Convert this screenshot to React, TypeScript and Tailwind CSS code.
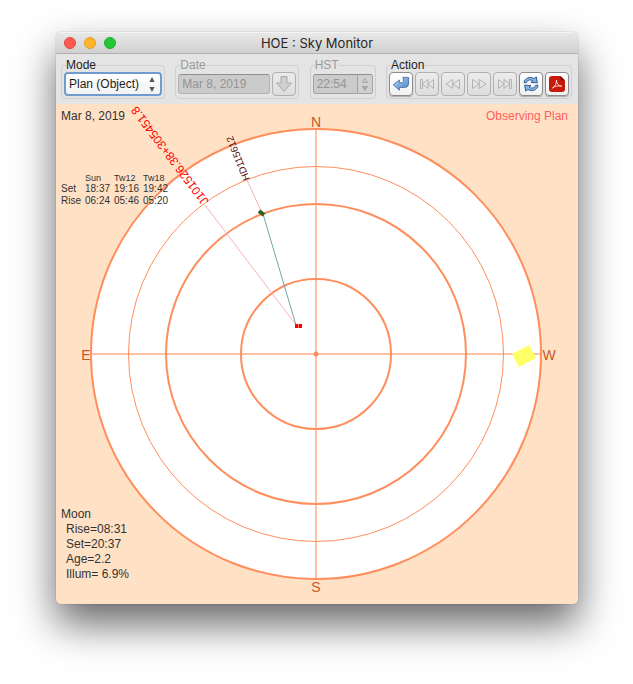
import { useState, type ReactNode } from "react";

const RING = "#ff8e5c";

const rings = [
  { r: 225, width: 2 },
  { r: 187.5, width: 1 },
  { r: 150, width: 2 },
  { r: 75, width: 2 },
];

const modes = ["Plan (Object)", "Plan (Time)", "Monitor"];

const twilight = [
  { label: "Set", times: ["18:37", "19:16", "19:42"] },
  { label: "Rise", times: ["06:24", "05:46", "05:20"] },
];

const moon = ["Rise=08:31", "Set=20:37", "Age=2.2", "Illum= 6.9%"];

function Group({
  title,
  disabled,
  htmlFor,
  children,
}: {
  title: string;
  disabled?: boolean;
  htmlFor?: string;
  children: ReactNode;
}) {
  return (
    <fieldset
      disabled={disabled}
      className="min-w-0 rounded border border-[#cfcfcf] px-[2px] pb-[2px]"
    >
      <legend
        className={`ml-[2px] h-[14px] text-xs leading-[14px] ${disabled ? "text-[#999999]" : "text-[#1c1c1c]"}`}
      >
        {htmlFor ? <label htmlFor={htmlFor}>{title}</label> : title}
      </legend>
      <div className="flex h-6 items-center gap-[2px]">{children}</div>
    </fieldset>
  );
}

function ToolButton({
  label,
  disabled,
  children,
}: {
  label: string;
  disabled?: boolean;
  children: ReactNode;
}) {
  return (
    <button
      type="button"
      aria-label={label}
      disabled={disabled}
      className={`flex size-6 shrink-0 items-center justify-center rounded border ${
        disabled
          ? "border-[#b0b0b0] bg-linear-to-b from-[#ececec] to-[#dddddd]"
          : "border-[#8c8c8c] bg-linear-to-b from-white to-[#f1f1f1] shadow-[0_1px_1px_rgba(0,0,0,0.25)]"
      }`}
    >
      {children}
    </button>
  );
}

function ReturnIcon() {
  return (
    <svg viewBox="0 0 18 18" className="size-[18px]">
      <defs>
        <linearGradient id="returnFill" x1="0" y1="0" x2="1" y2="1">
          <stop offset="0" stopColor="#c3dbf1" />
          <stop offset="0.5" stopColor="#7fabdb" />
          <stop offset="1" stopColor="#4d82c0" />
        </linearGradient>
      </defs>
      <path
        d="M1.2 9.800 L7.4 5 V7.700 H10.2 Q11.4 7.600 11.4 6.400 V3.200 L10.6 2.400 H16.6 V8.200 Q16.6 12.400 12.400 12.400 H7.400 V15.200 Z"
        fill="url(#returnFill)"
        stroke="#3a679f"
        strokeWidth="0.8"
        strokeLinejoin="round"
      />
    </svg>
  );
}

function TransportIcon({ d }: { d: string }) {
  return (
    <svg viewBox="0 0 18 18" className="size-[18px]">
      <path d={d} fill="#e6e6e6" stroke="#b2b2b2" strokeWidth="1" strokeLinejoin="round" />
    </svg>
  );
}

function RefreshIcon() {
  return (
    <svg viewBox="0 0 18 18" className="size-[18px]" strokeLinejoin="round">
      <g fill="#8db4dd" stroke="#2c5c9c" strokeWidth="1">
        <path d="M2 7.6 C2.6 3.4 7.6 0.8 12.2 3.6 L14.2 1.8 L15.4 7.8 L9 7.4 L10.8 5.6 C8 4.2 5 5.2 4.2 7.8 Z" />
        <path d="M16 10.4 C15.4 14.6 10.4 17.2 5.8 14.4 L3.8 16.2 L2.6 10.2 L9 10.6 L7.2 12.4 C10 13.8 13 12.8 13.8 10.2 Z" />
      </g>
    </svg>
  );
}

function PdfIcon() {
  return (
    <svg viewBox="0 0 18 18" className="size-[18px]">
      <path
        d="M4 1 H12.500 L17 5.500 V14 Q17 17 14 17 H4 Q1 17 1 14 V4 Q1 1 4 1 Z"
        fill="#c8190b"
      />
      <path d="M12.500 1 L17 5.500 H14 Q12.500 5.500 12.500 4 Z" fill="#6e0d06" />
      <path
        d="M4.800 13.200 C6.800 11.600 8.600 8.400 8.500 5.200 C8.600 8.400 10.400 11 13.600 11.200 C10.200 10.400 7.200 11 4.800 12.600"
        fill="none"
        stroke="#fff"
        strokeWidth="0.8"
        strokeLinecap="round"
      />
    </svg>
  );
}

function SkyChart() {
  return (
    <svg
      viewBox="0 0 522 500"
      className="block h-auto w-full overflow-visible"
      role="img"
      aria-label="Sky chart"
      fontFamily='"Liberation Sans", Arial, sans-serif'
    >
      <circle cx="260" cy="250" r="225" fill="#fff" />
      <path d="M35 250 H485 M260 25 V475" stroke={RING} strokeOpacity="0.55" strokeWidth="2" />
      {rings.map((ring) => (
        <circle
          key={ring.r}
          cx="260"
          cy="250"
          r={ring.r}
          fill="none"
          stroke={RING}
          strokeWidth={ring.width}
        />
      ))}
      <circle cx="260" cy="250" r="2.5" fill={RING} />

      <g fill="#c4592a" fontSize="14" textAnchor="middle">
        <text x="260" y="23">N</text>
        <text x="260" y="488">S</text>
        <text x="30" y="256">E</text>
        <text x="493" y="256">W</text>
      </g>

      {/* moon */}
      <path d="M456 250 L473 241 L480 254 L463 263 Z" fill="#ffff66" />

      {/* targets and slew track */}
      <path d="M240 221 L149 101 M206 109 L191 76" stroke="#ffb0b0" strokeWidth="1" />
      <path d="M240 221 L207 110" stroke="#74a5a3" strokeWidth="1" />
      <path d="M239 220 h3 v4 h-3 Z M242.500 220 h3.500 v4 h-3.500 Z" fill="#ff0000" />
      <path d="M203 107 L208 111" stroke="#2d5f1e" strokeWidth="4" />
      <text transform="translate(153 97) rotate(233)" fontSize="12" fill="#ff0000">
        J101526.38+305451.8
      </text>
      <text transform="translate(194 75) rotate(248)" fontSize="10" fill="#551111">
        HD115612
      </text>
    </svg>
  );
}

export default function App() {
  const [mode, setMode] = useState(modes[0]);

  return (
    <div className="min-h-screen bg-white pt-8 pr-[55px] pb-20 pl-14 font-['Liberation_Sans',Arial,sans-serif] text-xs text-[#333333]">
      <main className="rounded-[5px] bg-[#e4e4e4] shadow-[0_0_1px_rgba(0,0,0,0.5),0_20px_40px_rgba(0,0,0,0.6)]">
        <header className="grid h-[22px] grid-cols-[1fr_auto_1fr] items-center rounded-t-[5px] border-t border-b border-t-[#f4f4f4] border-b-[#b1b1b1] bg-linear-to-b from-[#e8e8e8] to-[#d0d0d0] px-2">
          <div className="flex gap-2">
            <button aria-label="Close" className="size-3 rounded-full border border-[#e2463f] bg-[#ff5a52]" />
            <button aria-label="Minimize" className="size-3 rounded-full border border-[#e0a033] bg-[#ffb429]" />
            <button aria-label="Zoom" className="size-3 rounded-full border border-[#1dad2b] bg-[#25c638]" />
          </div>
          <h1 className="font-[Inter,sans-serif] text-[13px] leading-5 text-[#262626]">HOE : Sky Monitor</h1>
        </header>

        <div className="flex justify-between pt-1 pr-[6px] pb-[5px] pl-[5px]">
          <Group title="Mode" htmlFor="mode">
            <div className="relative">
              <select
                id="mode"
                value={mode}
                onChange={(e) => setMode(e.target.value)}
                className="h-6 w-[98px] appearance-none rounded border-2 border-[#6f9bce] bg-linear-to-b from-white to-[#f3f3f3] pl-[3px] text-xs text-[#1c1c1c] outline-none"
              >
                {modes.map((m) => (
                  <option key={m}>{m}</option>
                ))}
              </select>
              <svg viewBox="0 0 6 16" className="pointer-events-none absolute top-1 right-[7px] h-4 w-[6px]">
                <path d="M3 1 L5.6 6 H0.4 Z M3 16 L5.6 11 H0.4 Z" fill="#555555" />
              </svg>
            </div>
          </Group>

          <Group title="Date" htmlFor="date" disabled>
            <input
              id="date"
              defaultValue="Mar 8, 2019"
              className="h-5 w-[92px] rounded-[3px] border border-[#b4b4b4] border-t-[#8f8f8f] bg-[#cbcbcb] px-[3px] text-xs text-[#939393]"
            />
            <ToolButton label="Choose date" disabled>
              <svg viewBox="0 0 18 18" className="size-[18px]">
                <path
                  d="M6 1.500 H12 V8 H16.500 L9 16.500 L1.500 8 H6 Z"
                  fill="#cfcfcf"
                  stroke="#ababab"
                  strokeLinejoin="round"
                />
              </svg>
            </ToolButton>
          </Group>

          <Group title="HST" htmlFor="hst" disabled>
            <div className="flex h-5 overflow-hidden rounded-[3px] border border-[#a3a3a3] border-t-[#8f8f8f] bg-[#cbcbcb]">
              <input id="hst" defaultValue="22:54" className="w-[43px] px-[3px] text-xs text-[#939393]" />
              <div className="flex w-[15px] flex-col items-center justify-center gap-[3px] border-l border-[#a3a3a3] bg-[#d0d0d0]">
                <button aria-label="Later">
                  <svg viewBox="0 0 6 5" className="block h-[5px] w-[6px]">
                    <path d="M3 0.500 L5.500 4.500 H0.500 Z" fill="#cccccc" stroke="#9a9a9a" strokeWidth="0.8" />
                  </svg>
                </button>
                <button aria-label="Earlier">
                  <svg viewBox="0 0 6 5" className="block h-[5px] w-[6px]">
                    <path d="M3 4.500 L5.500 0.500 H0.500 Z" fill="#aaaaaa" stroke="#9a9a9a" strokeWidth="0.8" />
                  </svg>
                </button>
              </div>
            </div>
          </Group>

          <Group title="Action">
            <ToolButton label="Return">
              <ReturnIcon />
            </ToolButton>
            <ToolButton label="First" disabled>
              <TransportIcon d="M2.500 4.500 H4.500 V13.500 H2.500 Z M10 4.500 V13.500 L4.500 9 Z M15.500 4.500 V13.500 L10 9 Z" />
            </ToolButton>
            <ToolButton label="Back" disabled>
              <TransportIcon d="M8.800 4.500 V13.500 L2 9 Z M15.500 4.500 V13.500 L8.800 9 Z" />
            </ToolButton>
            <ToolButton label="Forward" disabled>
              <TransportIcon d="M2.500 4.500 V13.500 L9.200 9 Z M9.200 4.500 V13.500 L16 9 Z" />
            </ToolButton>
            <ToolButton label="Last" disabled>
              <TransportIcon d="M2.500 4.500 V13.500 L8 9 Z M8 4.500 V13.500 L13.500 9 Z M13.500 4.500 H15.500 V13.500 H13.500 Z" />
            </ToolButton>
            <ToolButton label="Refresh">
              <RefreshIcon />
            </ToolButton>
            <ToolButton label="Save as PDF">
              <PdfIcon />
            </ToolButton>
          </Group>
        </div>

        <section className="relative rounded-b-[5px] bg-[#ffe1c6]">
          <SkyChart />
          <p className="absolute top-1 left-[5px] leading-4">Mar 8, 2019</p>
          <p className="absolute top-1 right-[10px] leading-4 text-[#ff5f5f]">Observing Plan</p>
          <table className="absolute top-[70px] left-[5px] table-fixed border-collapse text-left text-[10px] leading-3">
            <thead>
              <tr className="text-[9px] leading-[9px]">
                <td className="w-6" />
                <th className="w-[29px] font-normal">Sun</th>
                <th className="w-[29px] font-normal">Tw12</th>
                <th className="w-[29px] font-normal">Tw18</th>
              </tr>
            </thead>
            <tbody>
              {twilight.map((row) => (
                <tr key={row.label}>
                  <th className="font-normal">{row.label}</th>
                  {row.times.map((time) => (
                    <td key={time}>{time}</td>
                  ))}
                </tr>
              ))}
            </tbody>
          </table>
          <div className="absolute bottom-[22px] left-[5px] leading-[15px]">
            <h2 className="leading-4">Moon</h2>
            <ul className="pl-[5px]">
              {moon.map((line) => (
                <li key={line}>{line}</li>
              ))}
            </ul>
          </div>
        </section>
      </main>
    </div>
  );
}
